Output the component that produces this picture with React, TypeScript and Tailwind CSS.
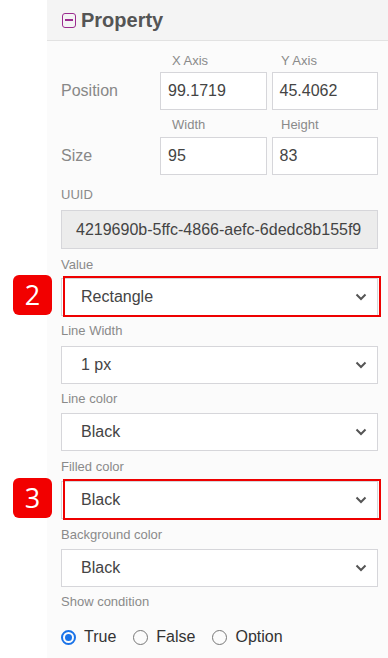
const font = { fontFamily: '"Liberation Sans", Arial, sans-serif' };

function Chevron() {
  return (
    <svg width="12" height="8" viewBox="0 0 12 8" className="text-[#555]">
      <path d="M1.5 1.5 6 6l4.5-4.5" fill="none" stroke="currentColor" strokeWidth="2" />
    </svg>
  );
}

function Label({ children, className = "" }: { children: React.ReactNode; className?: string }) {
  return <div className={`h-[18px] text-[13px] leading-[18px] text-[#8a8a8a] ${className}`}>{children}</div>;
}

function Select({ value, marked }: { value: string; marked?: boolean }) {
  return (
    <div className="relative">
      <div className="flex h-[38px] items-center justify-between border border-[#d6d6da] bg-white pl-[19px] pr-[10px] text-[16px] text-[#444]">
        <span>{value}</span>
        <Chevron />
      </div>
      {marked && (
        <div className="pointer-events-none absolute -top-[2px] -right-[3px] -bottom-[1px] left-[2px] border-2 border-[#ee0000]" />
      )}
    </div>
  );
}

function Badge({ n }: { n: string }) {
  return (
    <div className="absolute -left-[48px] -top-[3px] flex h-[40px] w-[39px] items-center justify-center rounded-[6px] bg-[#f20000] text-[27px] text-white" style={{ fontFamily: '"Open Sans", "Liberation Sans", sans-serif' }}>
      {n}
    </div>
  );
}

function NumInput({ value }: { value: string }) {
  return (
    <div className="flex h-[38px] flex-1 items-center border border-[#d6d6da] bg-white pl-[7px] text-[16px] text-[#444]">
      {value}
    </div>
  );
}

function Radio({ label, checked }: { label: string; checked?: boolean }) {
  return (
    <div className="flex items-center gap-[8px]">
      {checked ? (
        <span className="flex h-[15px] w-[15px] items-center justify-center rounded-full border-2 border-[#1a73e8]">
          <span className="h-[7px] w-[7px] rounded-full bg-[#1a73e8]" />
        </span>
      ) : (
        <span className="h-[15px] w-[15px] rounded-full border border-[#777]" />
      )}
      <span className="text-[16px] text-[#333]">{label}</span>
    </div>
  );
}

export default function App() {
  return (
    <div className="flex h-[658px] w-[388px] bg-white" style={font}>
      <div className="w-[47px] shrink-0" />
      <div className="flex-1 bg-[#fbfbfb]">
        <div className="flex h-[41px] items-center gap-[5px] border-b border-[#e2e2e2] bg-[#f4f4f4] pl-[15px]">
          <span className="flex h-[15px] w-[14px] items-center justify-center rounded-[3px] border-[1.5px] border-[#9b2c8f]">
            <span className="h-[1.5px] w-[8px] bg-[#9b2c8f]" />
          </span>
          <span className="text-[20px] font-bold text-[#555]">Property</span>
        </div>

        <div className="pl-[14px] pr-[10px]">
          <div className="mt-[10px] flex">
            <div className="w-[99px]" />
            <Label className="flex-1 pl-[12px] leading-[20px]">X Axis</Label>
            <Label className="flex-1 pl-[12px] leading-[20px]">Y Axis</Label>
          </div>
          <div className="mt-[3px] flex items-center">
            <div className="w-[99px] text-[16px] text-[#888]">Position</div>
            <div className="flex flex-1 gap-[5px]">
              <NumInput value="99.1719" />
              <NumInput value="45.4062" />
            </div>
          </div>
          <div className="mt-[5px] flex">
            <div className="w-[99px]" />
            <Label className="flex-1 pl-[12px] leading-[20px]">Width</Label>
            <Label className="flex-1 pl-[12px] leading-[20px]">Height</Label>
          </div>
          <div className="mt-[4px] flex items-center">
            <div className="w-[99px] text-[16px] text-[#888]">Size</div>
            <div className="flex flex-1 gap-[5px]">
              <NumInput value="95" />
              <NumInput value="83" />
            </div>
          </div>

          <Label className="mt-[11px]">UUID</Label>
          <div className="mt-[6px] flex h-[39px] items-center border border-[#d6d6da] bg-[#ececec] pl-[14px] text-[16px] text-[#444]">
            4219690b-5ffc-4866-aefc-6dedc8b155f9
          </div>

          <Label className="mt-[7px]">Value</Label>
          <div className="relative mt-[4px]">
            <Badge n="2" />
            <Select value="Rectangle" marked />
          </div>

          <Label className="mt-[6px]">Line Width</Label>
          <div className="mt-[6px]">
            <Select value="1 px" />
          </div>

          <Label className="mt-[6px]">Line color</Label>
          <div className="mt-[5px]">
            <Select value="Black" />
          </div>

          <Label className="mt-[7px]">Filled color</Label>
          <div className="relative mt-[5px]">
            <Badge n="3" />
            <Select value="Black" marked />
          </div>

          <Label className="mt-[7px]">Background color</Label>
          <div className="mt-[5px]">
            <Select value="Black" />
          </div>

          <Label className="mt-[6px]">Show condition</Label>
          <div className="mt-[14px] flex items-center gap-[17px]">
            <Radio label="True" checked />
            <Radio label="False" />
            <Radio label="Option" />
          </div>
        </div>
      </div>
    </div>
  );
}
